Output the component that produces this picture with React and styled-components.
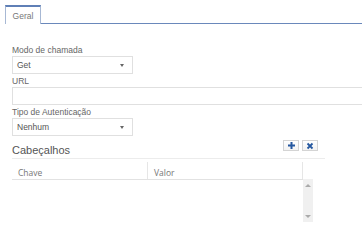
import styled, { createGlobalStyle } from "styled-components"

const Global = createGlobalStyle`
  body {
    margin: 0;
    background: #fff;
    font-family: "Liberation Sans", Arial, sans-serif;
    overflow: hidden;
  }
`
const Page = styled.div`
  width: 362px;
  height: 243px;
  overflow: hidden;
  padding-top: 5px;
  box-sizing: border-box;
`
const TabStrip = styled.div`
  display: flex;
  margin-left: 5px;
  border-bottom: 1px solid #6a88bb;
  height: 18px;
`
const Tab = styled.div`
  width: 36px;
  height: 19px;
  box-sizing: border-box;
  border: 1px solid #a7b8d4;
  border-top: 2px solid #5f7fb6;
  border-bottom: none;
  background: #fff;
  color: #777;
  font-size: 8.5px;
  display: flex;
  align-items: center;
  justify-content: center;
  padding-top: 1px;
  margin-bottom: -1px;
`
const Form = styled.div`
  padding: 21px 0 0 12px;
  display: flex;
  flex-direction: column;
`
const Label = styled.label`
  font-size: 8.5px;
  line-height: 11px;
  color: #666;
  margin-top: ${p => p.$gap || 0}px;
`
const Select = styled.div`
  width: 121px;
  height: 18px;
  box-sizing: border-box;
  border: 1px solid #e0e0e0;
  background: #fff;
  display: flex;
  align-items: center;
  justify-content: space-between;
  padding: 0 8px 0 4px;
  font-size: 8.5px;
  color: #555;
`
const Caret = styled.span`
  width: 0;
  height: 0;
  border-left: 2.5px solid transparent;
  border-right: 2.5px solid transparent;
  border-top: 3px solid #666;
`
const Input = styled.div`
  width: 360px;
  height: 18px;
  box-sizing: border-box;
  border: 1px solid #e0e0e0;
  background: #fff;
`
const HeadRow = styled.div`
  width: 313px;
  display: flex;
  align-items: flex-end;
  justify-content: space-between;
  border-bottom: 1px solid #ececec;
  margin-top: 6px;
  height: 17px;
  box-sizing: border-box;
  padding-bottom: 1px;
`
const Heading = styled.div`
  font-size: 11px;
  line-height: 13px;
  color: #555;
`
const Tools = styled.div`
  display: flex;
  gap: 3px;
  align-self: flex-start;
  margin-top: -2px;
  padding-right: 7px;
`
const ToolButton = styled.div`
  width: 16px;
  height: 11px;
  box-sizing: border-box;
  border: 1px solid #d4d4d4;
  background: linear-gradient(#fff, #f2f2f2);
  display: flex;
  align-items: center;
  justify-content: center;
`
const Table = styled.div`
  width: 301px;
  display: flex;
`
const Grid = styled.div`
  width: 291px;
  display: flex;
  flex-direction: column;
`
const HeaderRow = styled.div`
  height: 21px;
  display: grid;
  grid-template-columns: 136px 1fr;
  border-bottom: 1px solid #e2e2e2;
  box-sizing: border-box;
`
const HeaderCell = styled.div`
  font-family: "Open Sans", sans-serif;
  font-size: 8.5px;
  color: #777;
  padding: 4px 0 0 6px;
  display: flex;
  align-items: center;
  border-right: 1px solid #e6e6e6;
  margin-top: 3px;
`
const Side = styled.div`
  width: 10px;
  display: flex;
  flex-direction: column;
`
const Corner = styled.div`
  height: 20px;
`
const Scrollbar = styled.div`
  height: 43px;
  background: #f0f0f0;
  display: flex;
  flex-direction: column;
  justify-content: space-between;
  align-items: center;
  padding: 5px 0 4px;
  box-sizing: border-box;
`
const Arrow = styled.span`
  width: 0;
  height: 0;
  border-left: 3px solid transparent;
  border-right: 3px solid transparent;
  ${p => p.$up ? "border-bottom: 3px solid #aaa;" : "border-top: 3px solid #aaa;"}
`

const App = () => {
  return (
    <Page>
      <Global />
      <TabStrip>
        <Tab>Geral</Tab>
      </TabStrip>
      <Form>
        <Label>Modo de chamada</Label>
        <Select>Get<Caret /></Select>
        <Label $gap={2}>URL</Label>
        <Input />
        <Label $gap={2}>Tipo de Autenticação</Label>
        <Select>Nenhum<Caret /></Select>
        <HeadRow>
          <Heading>Cabeçalhos</Heading>
          <Tools>
            <ToolButton>
              <svg width="9" height="9" viewBox="0 0 9 9">
                <path d="M4.5 1v7M1 4.5h7" stroke="#24579f" strokeWidth="2" />
              </svg>
            </ToolButton>
            <ToolButton>
              <svg width="8" height="8" viewBox="0 0 8 8">
                <path d="M1.5 1.5l5 5M6.5 1.5l-5 5" stroke="#24579f" strokeWidth="1.8" />
              </svg>
            </ToolButton>
          </Tools>
        </HeadRow>
        <Table>
          <Grid>
            <HeaderRow>
              <HeaderCell>Chave</HeaderCell>
              <HeaderCell>Valor</HeaderCell>
            </HeaderRow>
          </Grid>
          <Side>
            <Corner />
            <Scrollbar>
              <Arrow $up />
              <Arrow />
            </Scrollbar>
          </Side>
        </Table>
      </Form>
    </Page>
  )
}

export default App
